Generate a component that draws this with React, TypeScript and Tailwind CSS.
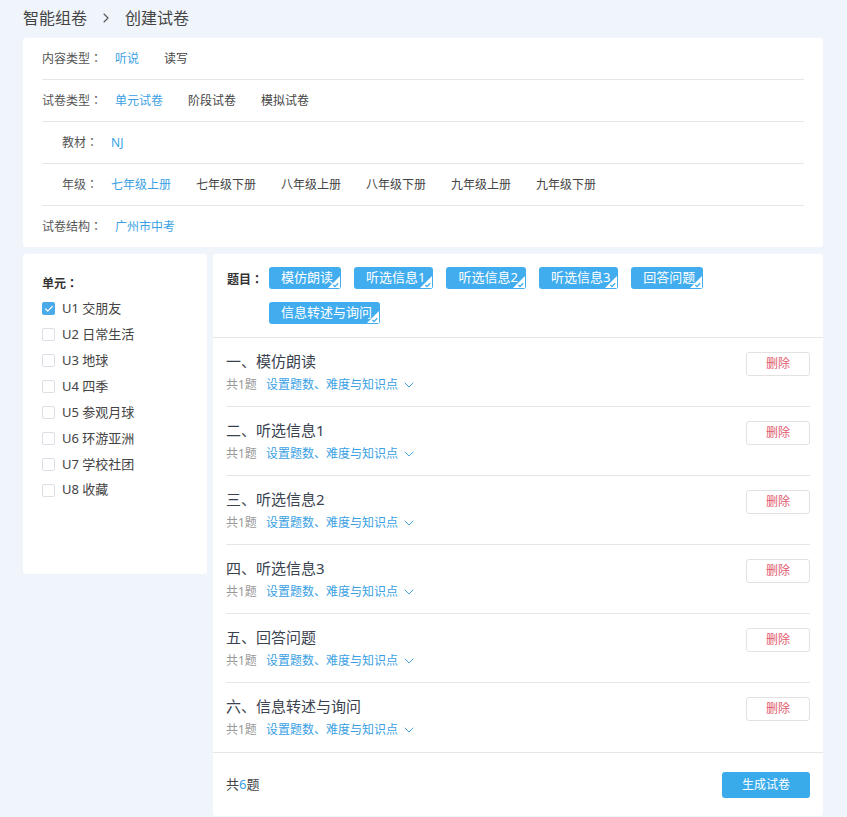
import { Check, ChevronDown, ChevronRight } from "lucide-react";

const font = "font-['Noto_Sans','Noto_Sans_CJK_SC',sans-serif]";

type Opt = { label: string; active?: boolean };

const filters: { label: string; indent?: boolean; options: Opt[] }[] = [
  { label: "内容类型", options: [{ label: "听说", active: true }, { label: "读写" }] },
  {
    label: "试卷类型",
    options: [{ label: "单元试卷", active: true }, { label: "阶段试卷" }, { label: "模拟试卷" }],
  },
  { label: "教材", indent: true, options: [{ label: "NJ", active: true }] },
  {
    label: "年级",
    indent: true,
    options: [
      { label: "七年级上册", active: true },
      { label: "七年级下册" },
      { label: "八年级上册" },
      { label: "八年级下册" },
      { label: "九年级上册" },
      { label: "九年级下册" },
    ],
  },
  { label: "试卷结构", options: [{ label: "广州市中考", active: true }] },
];

const units = ["U1 交朋友", "U2 日常生活", "U3 地球", "U4 四季", "U5 参观月球", "U6 环游亚洲", "U7 学校社团", "U8 收藏"];

const tags = ["模仿朗读", "听选信息1", "听选信息2", "听选信息3", "回答问题", "信息转述与询问"];

const sections = [
  "一、模仿朗读",
  "二、听选信息1",
  "三、听选信息2",
  "四、听选信息3",
  "五、回答问题",
  "六、信息转述与询问",
];

// centred full-width colon, as in the reference
function Colon() {
  return <span className="font-['Noto_Sans_CJK_JP',sans-serif]">：</span>;
}

function Tag({ label }: { label: string }) {
  return (
    <div className="relative flex h-[22px] items-center rounded-[3px] bg-[#41adef] pl-[12px] pr-[8px] text-[13px] text-white">
      <span>{label}</span>
      {/* corner check */}
      <svg className="absolute bottom-[1px] right-[1px]" width="12" height="12" viewBox="0 0 12 12">
        <path d="M12 0 L12 12 L0 12 Z" fill="#ffffff" />
        <path d="M5.3 9 L7 10.5 L10.2 7.2" fill="none" stroke="#41adef" strokeWidth="1.3" />
      </svg>
    </div>
  );
}

export default function App() {
  return (
    <div className={`${font} min-h-[817px] bg-[#f0f4fb] pb-[2px] pl-[23px] pr-[24px]`}>
      {/* Breadcrumb */}
      <div className="flex h-[38px] items-center pb-[2px] text-[16px] text-[#444]">
        <span>智能组卷</span>
        <ChevronRight className="mx-[11px] text-[#555]" size={16} strokeWidth={1.6} />
        <span>创建试卷</span>
      </div>

      {/* Filters */}
      <div className="rounded-[3px] bg-white px-[19px] text-[12px]">
        {filters.map((f, i) => (
          <div
            key={f.label}
            className={`flex items-center ${
              i < filters.length - 1 ? "h-[42px] border-b border-[#e6e6e6]" : "h-[41px]"
            }`}
          >
            <span className={`text-[#555] ${f.indent ? "pl-[20px]" : ""}`}>
              {f.label}
              <Colon />
            </span>
            <div className="ml-[13px] flex gap-[25px]">
              {f.options.map((o) => (
                <span key={o.label} className={o.active ? "text-[#3a9fe3]" : "text-[#444]"}>
                  {o.label}
                </span>
              ))}
            </div>
          </div>
        ))}
      </div>

      <div className="mt-[7px] flex items-start gap-[6px]">
        {/* Units */}
        <div className="h-[320px] w-[184px] shrink-0 rounded-[3px] bg-white px-[19px] pt-[20px]">
          <div className="text-[12px] font-bold text-[#333]">
            单元
            <Colon />
          </div>
          <div className="mt-[3px] flex flex-col">
            {units.map((u, i) => (
              <div key={u} className="flex h-[25.9px] items-center gap-[7px] text-[13px] text-[#444]">
                {i === 0 ? (
                  <span className="flex h-[13px] w-[13px] items-center justify-center rounded-[2px] bg-[#4aa9e8]">
                    <Check size={10} strokeWidth={3} className="text-white" />
                  </span>
                ) : (
                  <span className="h-[13px] w-[13px] rounded-[2px] border border-[#dcdfe6]" />
                )}
                <span>{u}</span>
              </div>
            ))}
          </div>
        </div>

        {/* Question structure */}
        <div className="flex-1 rounded-[3px] bg-white">
          <div className="flex border-b border-[#e6e6e6] px-[14px] py-[13px]">
            <span className="mt-[3px] w-[42px] shrink-0 text-[12px] font-bold text-[#333]">
              题目
              <Colon />
            </span>
            <div className="flex flex-wrap gap-[13px]">
              {tags.map((t) => (
                <Tag key={t} label={t} />
              ))}
            </div>
          </div>

          <div className="px-[13px]">
            {sections.map((s, i) => (
              <div
                key={s}
                className={`flex h-[69px] items-start justify-between pt-[13px] ${
                  i < sections.length - 1 ? "border-b border-[#e6e6e6]" : ""
                }`}
              >
                <div>
                  <div className="text-[15px] leading-[20px] text-[#3b4350]">{s}</div>
                  <div className="mt-[5px] flex items-center text-[12px] leading-[18px]">
                    <span className="text-[#999]">共1题</span>
                    <span className="ml-[9px] text-[#3a9fe3]">设置题数、难度与知识点</span>
                    <ChevronDown className="ml-[3px] text-[#3a9fe3]" size={16} strokeWidth={1.4} />
                  </div>
                </div>
                <button className="mt-[1px] h-[24px] w-[64px] rounded-[3px] border border-[#e2e2e2] bg-white text-[12px] text-[#e25a6e]">
                  删除
                </button>
              </div>
            ))}
          </div>

          <div className="flex items-center justify-between border-t border-[#e6e6e6] px-[13px] pb-[18px] pt-[19px]">
            <span className="text-[13px] text-[#444]">
              共<span className="text-[#3a9fe3]">6</span>题
            </span>
            <button className="h-[26px] w-[88px] rounded-[3px] bg-[#3aabea] text-[12px] text-white">生成试卷</button>
          </div>
        </div>
      </div>
    </div>
  );
}
